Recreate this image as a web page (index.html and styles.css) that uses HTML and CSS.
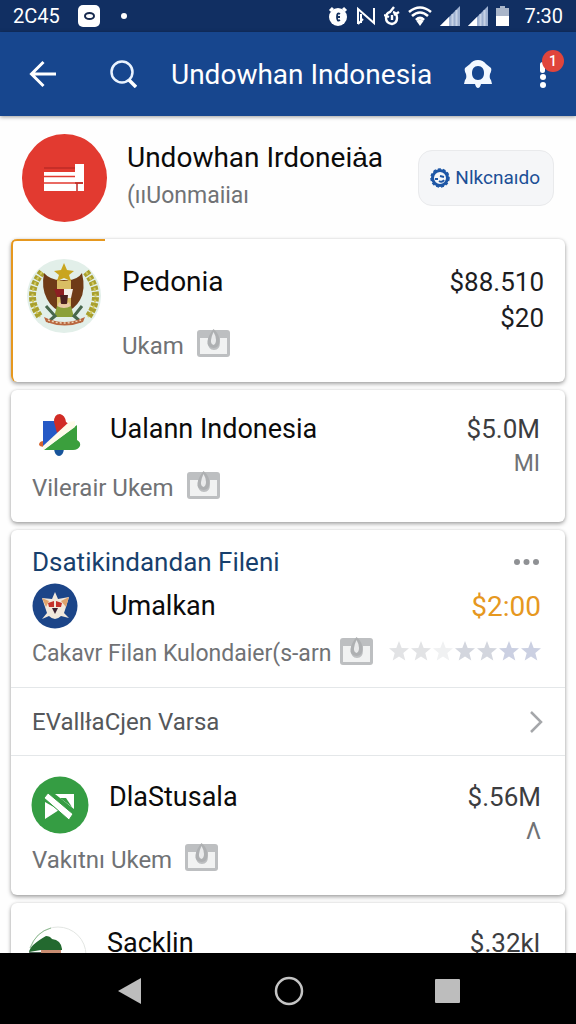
FILE: index.html
```html
<!DOCTYPE html>
<html lang="id">
<head>
  <meta charset="UTF-8" />
  <meta name="viewport" content="width=device-width, initial-scale=1.0"/>
  <title>Undowhan Indonesia</title>
  <link rel="stylesheet" href="styles.css">
</head>
<body>

  <!-- Shared icons -->
  <svg class="sprite" aria-hidden="true">
    <symbol id="card-icon" viewBox="0 0 33 28">
      <rect x="0" y="1" width="33" height="27" rx="3" fill="#bdbfc1"/>
      <path d="M3 9h8v4q0 8 6 8t6-8V9h7v16H3z" fill="#f1f2f2"/>
      <path d="M16.500 0q6 5 6 12t-6 7q-7-1-6-7t6-12z" fill="#aeb0b2"/>
      <path d="M16.500 3q2.500 4 2.500 8t-2.500 5q-3-1-2.500-5t2.500-8z" fill="#e9eaeb"/>
    </symbol>
    <symbol id="star" viewBox="0 0 20 20">
      <path d="M10 0l2.700 6.900 7.300.4-5.700 4.700 2 7.500L10 15.400 3.700 19.500l2-7.500L0 7.300l7.300-.4z" fill="currentColor"/>
    </symbol>
    <symbol id="signal" viewBox="0 0 20 20">
      <path d="M20 0v20H0z" fill="#9db0d0"/>
      <path d="M9 11v9H0z" fill="#fff"/>
      <path d="M12.500 8v12M16.500 4v16" stroke="#c6d2e6" stroke-width="2"/>
    </symbol>
  </svg>

  <div class="status-bar">
    <span class="status-time">2C45</span>
    <svg class="status-app" viewBox="0 0 22 22" width="22" height="22">
      <rect width="22" height="22" rx="5" fill="#fff"/>
      <ellipse cx="11.500" cy="11" rx="4.500" ry="3" fill="none" stroke="#16294d" stroke-width="2"/>
    </svg>
    <span class="status-dot"></span>
    <div class="status-icons">
      <svg viewBox="0 0 20 20" width="20" height="20">
        <circle cx="10" cy="11" r="9" fill="#fff"/>
        <path d="M2 5l3-3M18 5l-3-3" stroke="#fff" stroke-width="3"/>
        <path d="M12 8q-3-2-3 3t3 3M9 11h3" fill="none" stroke="#12305f" stroke-width="1.800"/>
      </svg>
      <svg viewBox="0 0 20 20" width="20" height="20">
        <path d="M2 18V3l16 14V2M5 17V8M2 18l5-5" fill="none" stroke="#fff" stroke-width="2"/>
      </svg>
      <svg viewBox="0 0 16 20" width="16" height="20">
        <path d="M10 1L6 6Q2 7 2 12t6 6q5-1 5-6t-4-6M0 9l5 2M15 6l-5 3" fill="none" stroke="#fff" stroke-width="2.400"/>
        <path d="M8 9v5" stroke="#fff" stroke-width="2.400"/>
      </svg>
      <svg viewBox="0 0 24 20" width="24" height="20">
        <path d="M1 6q11-9 22 0M4 10q8-7 16 0M8 14q4-4 8 0" fill="none" stroke="#fff" stroke-width="2.600"/>
        <path d="M8.500 15q3.500-3 7 0L12 20z" fill="#fff"/>
      </svg>
      <svg width="20" height="20"><use href="#signal"/></svg>
      <svg width="20" height="20"><use href="#signal"/></svg>
      <svg viewBox="0 0 13 20" width="13" height="20">
        <path d="M4 0h5v2h4v18H0V2h4z" fill="#a9b5c9"/>
        <path d="M0 10h13v10H0z" fill="#fff"/>
      </svg>
    </div>
    <span class="status-clock">7:30</span>
  </div>

  <header class="app-bar">
    <button class="icon-btn" aria-label="Back">
      <svg viewBox="0 0 28 28" width="28" height="28">
        <path d="M27 14H3M14.500 2L2.500 14l12 12" fill="none" stroke="#fff" stroke-width="3"/>
      </svg>
    </button>
    <button class="icon-btn search" aria-label="Search">
      <svg viewBox="0 0 28 28" width="28" height="28">
        <circle cx="13" cy="12" r="10.500" fill="none" stroke="#eaf3ff" stroke-width="2.500"/>
        <path d="M20 20l7 7" stroke="#fff" stroke-width="3.500"/>
      </svg>
    </button>
    <h1 class="app-title">Undowhan Indonesia</h1>
    <button class="icon-btn bell" aria-label="Notifications">
      <svg viewBox="0 0 28 28" width="28" height="28">
        <path fill-rule="evenodd" d="M14 0q5 0 8 4l5 4q1 2-1 6-1 4 1 6l1 4H17q-1 4-3 4t-3-4H0l1-4q2-2 1-6Q0 10 1 8l5-4q3-4 8-4zM14 6c-4 0-6 3-6 7s2 7 6 7 6-3 6-7-2-7-6-7z" fill="#f3f8ff"/>
      </svg>
    </button>
    <button class="icon-btn menu" aria-label="Menu, 1 alert">
      <svg viewBox="0 0 28 28" width="28" height="28">
        <rect x="11" y="2" width="5" height="11" rx="2.500" fill="#fff"/>
        <circle cx="14" cy="17" r="3" fill="#fff"/>
        <circle cx="14" cy="25" r="3" fill="#fff"/>
      </svg>
      <span class="badge">1</span>
    </button>
  </header>

  <main class="content">
    <section class="profile">
      <svg class="profile-logo" viewBox="0 0 86 88">
        <ellipse cx="42.500" cy="44" rx="42.500" ry="44" fill="#e23a30"/>
        <path d="M22 38h31v-8h9v27H22z" fill="#fff"/>
        <path d="M22 42.500h31M22 49h39" stroke="#e23a30" stroke-width="1.500"/>
        <path d="M22 34h31M53 49h8M55 49v8" stroke="#bd2b26" stroke-width="1.500"/>
      </svg>
      <div class="profile-text">
        <h2 class="name">Undowhan Irdoneiȧa</h2>
        <p class="sub">(ııUonmaiiaı</p>
      </div>
      <button class="follow-btn">
        <svg viewBox="0 0 20 20" width="20" height="20">
          <circle cx="10" cy="10" r="7.500" fill="none" stroke="#1d56a5" stroke-width="3"/>
          <circle cx="10" cy="10" r="9" fill="none" stroke="#1d56a5" stroke-width="1.500" stroke-dasharray="3 2"/>
          <path d="M5 11h3M10 8l4 1M9 13q3 2 5-1" fill="none" stroke="#1d56a5" stroke-width="2"/>
        </svg>
        Nlkcnaıdo
      </button>
    </section>

    <article class="card featured">
      <svg class="emblem" viewBox="0 0 74 74">
        <circle cx="37" cy="37" r="37" fill="#e2efe9"/>
        <path d="M15 13Q-3 36 13 58M59 13q18 23 2 45" fill="none" stroke="#a9a02e" stroke-width="7" stroke-dasharray="4 1.500"/>
        <path d="M15 13Q-3 36 13 58M59 13q18 23 2 45" fill="none" stroke="#d1c85e" stroke-width="2" stroke-dasharray="3 3"/>
        <path d="M17 14q7 8 20 7 13 1 18-7 4 17-2 27-5 9-16 13-12-4-17-14-6-11-3-26z" fill="#6f3b18"/>
        <path d="M30 20q7 4 14 0v28H30z" fill="#d9bd64"/>
        <path d="M27 30h10v8h-7z" fill="#8d1f22"/>
        <path d="M37 30h9l-2 9h-7z" fill="#f4efe8"/>
        <path d="M33 36h8l-1 9h-6z" fill="#4a2020"/>
        <path d="M32 43q5 5 10 0l2 6q-7 4-14 0z" fill="#e9c9a6"/>
        <path d="M30 47q7 4 14 0l3 11H27z" fill="#8ba039"/>
        <path d="M19 47l9 10-7 6M55 47l-8 10 7 6" fill="none" stroke="#48684c" stroke-width="3"/>
        <path d="M17 58q20 10 41 0l-2 5q-18 7-37 0z" fill="#b9673f"/>
        <path d="M21 61q16 6 33 0" fill="none" stroke="#ecd3b6" stroke-width="1.500" stroke-dasharray="2 2"/>
        <path d="M37 4l3 7 7 1-5 4 2 6-7-3-7 3 2-6-5-4 7-1z" fill="#c9a51f"/>
      </svg>
      <div class="card-main">
        <h3 class="name">Pedonia</h3>
        <p class="sub-row">Ukam <svg class="tag"><use href="#card-icon"/></svg></p>
      </div>
      <div class="amounts dark">
        <span>$88.510</span>
        <span>$20</span>
      </div>
    </article>

    <article class="card compact">
      <div class="card-main">
        <div class="head">
          <span class="logo-slot">
            <svg viewBox="0 0 42 42" width="42" height="42">
              <path d="M0 31q0-4 5-4l2 5q-5 2-7-1z" fill="#d5622d"/>
              <path d="M15 35h10q-1 7-5 7t-5-7z" fill="#17549a"/>
              <path d="M4 7h12l8 7-20 21z" fill="#2559c6"/>
              <path d="M15 8q0-8 6-8 5 1 6 8l3 2-12 9z" fill="#d12c25"/>
              <path d="M38 11v15q4 2 3 6-2 4-7 4H5z" fill="#3b9f3d"/>
              <path d="M4 36v-4L30 8l6-1v6z" fill="#fffbea"/>
            </svg>
          </span>
          <h3 class="name">Ualann Indonesia</h3>
        </div>
        <p class="sub-row">Vilerair Ukem <svg class="tag"><use href="#card-icon"/></svg></p>
      </div>
      <div class="amounts">
        <span>$5.0M</span>
        <small>MI</small>
      </div>
    </article>

    <article class="card group">
      <div class="group-head">
        <h3 class="group-title">Dsatikindandan Fileni</h3>
        <button class="more-btn" aria-label="More">
          <svg viewBox="0 0 26 6" width="26" height="6" fill="#8f9194">
            <circle cx="3" cy="3" r="3"/><circle cx="12.500" cy="3" r="3"/><circle cx="22" cy="3" r="3"/>
          </svg>
        </button>
      </div>
      <div class="rated">
        <div class="head">
          <span class="logo-slot">
            <svg viewBox="0 0 46 46" width="46" height="46">
              <circle cx="23" cy="23" r="22.500" fill="#1c4588"/>
              <path d="M10 15l10 1 3-7 3 7 11-2-3 10-2 6 5 5-8-2q-6 6-12 0l-7 3 5-6-2-6z" fill="#f1e8dc"/>
              <path d="M10 15l7 3-3 6zM37 14l-8 4 5 6z" fill="#dfa36d"/>
              <path d="M16 20l6-2v6h-5zM24 18l6 2-1 4h-5z" fill="#c3312b"/>
              <path d="M20 25h6l-3 6z" fill="#3b2030"/>
            </svg>
          </span>
          <h3 class="name">Umalkan</h3>
          <span class="price">$2:00</span>
        </div>
        <div class="sub-row">
          <span>Cakavr Filan Kulondaier(s-arn</span>
          <svg class="tag"><use href="#card-icon"/></svg>
          <span class="stars" role="img" aria-label="Rating">
            <svg class="faint"><use href="#star"/></svg>
            <svg class="faint"><use href="#star"/></svg>
            <svg class="fainter"><use href="#star"/></svg>
            <svg><use href="#star"/></svg>
            <svg><use href="#star"/></svg>
            <svg class="blue"><use href="#star"/></svg>
            <svg class="blue"><use href="#star"/></svg>
          </span>
        </div>
      </div>
      <a class="link-row" href="#">
        <span>EVallłaCjen Varsa</span>
        <svg viewBox="0 0 14 22" width="14" height="22">
          <path d="M2 1l10 10L2 21" fill="none" stroke="#a5a7aa" stroke-width="2.500"/>
        </svg>
      </a>
      <div class="group-item">
        <div class="card-main">
          <div class="head">
            <span class="logo-slot">
              <svg viewBox="0 0 58 58" width="58" height="58">
                <circle cx="29" cy="29" r="28.500" fill="#359d43"/>
                <path d="M14 26v17l14-9zM24 18h19v15z" fill="#fff"/>
                <path d="M29 22h6l6 9z" fill="#359d43"/>
                <path d="M13 22l4-5 25 21-4 6z" fill="#fff" stroke="#359d43" stroke-width="1"/>
              </svg>
            </span>
            <h3 class="name">DlaStusala</h3>
          </div>
          <p class="sub-row">Vakıtnı Ukem <svg class="tag"><use href="#card-icon"/></svg></p>
        </div>
        <div class="amounts">
          <span>$.56M</span>
          <small>Λ</small>
        </div>
      </div>
    </article>

    <article class="card last">
      <div class="head">
        <span class="logo-slot">
          <svg viewBox="0 0 58 58" width="58" height="58">
            <circle cx="29" cy="29" r="28" fill="#fff" stroke="#e3e6e3"/>
            <path d="M1 22Q7 6 22 2" fill="none" stroke="#8cba8f"/>
            <path d="M12 23h20v20H12z" fill="#c98d72"/>
            <path d="M0 26h12v12H4z" fill="#4d6357"/>
            <path d="M0 26q1-7 17-16 4 0 6 3 9 1 10 10v1H12z" fill="#23692f"/>
          </svg>
        </span>
        <h3 class="name">Sacklin</h3>
      </div>
      <div class="amounts">
        <span>$.32kl</span>
      </div>
    </article>
  </main>

  <nav class="nav-bar">
    <button class="nav-btn" aria-label="Back">
      <svg viewBox="0 0 28 28" width="28" height="28"><path d="M25 1v26L2 14z" fill="#bdbdbd"/></svg>
    </button>
    <button class="nav-btn" aria-label="Home">
      <svg viewBox="0 0 30 30" width="30" height="30"><circle cx="15" cy="15" r="13" fill="none" stroke="#c4c4c4" stroke-width="2.500"/></svg>
    </button>
    <button class="nav-btn" aria-label="Recent apps">
      <svg viewBox="0 0 26 26" width="26" height="26"><rect x="1" y="1" width="25" height="24" rx="1" fill="#bdbdbd"/></svg>
    </button>
  </nav>

</body>
</html>
```
FILE: styles.css
```css
:root {
  --blue: #17468e;
  --blue-dark: #112f62;
  --link: #1b4f96;
  --orange: #e6981f;
  --text: #0b0b0b;
  --text-mid: #3c3d3f;
  --text-light: #707275;
  --line: #e4e7e9;
}

* {
  box-sizing: border-box;
  margin: 0;
  padding: 0;
}

body {
  display: flex;
  flex-direction: column;
  height: 100vh;
  overflow: hidden;
  background: #fefefe;
  color: var(--text);
  font-family: Roboto, "Liberation Sans", sans-serif;
}

button {
  border: none;
  background: none;
  font-family: inherit;
  cursor: pointer;
}

svg {
  display: block;
  flex-shrink: 0;
}

.sprite {
  position: absolute;
  width: 0;
  height: 0;
}

/* Status bar */
.status-bar {
  display: flex;
  align-items: center;
  flex-shrink: 0;
  height: 32px;
  padding: 0 13px;
  background: var(--blue-dark);
  color: #fff;
  font-size: 20px;
}

.status-app {
  margin-left: 18px;
}

.status-dot {
  width: 6px;
  height: 6px;
  margin-left: 21px;
  border-radius: 50%;
  background: #fff;
}

.status-icons {
  display: flex;
  gap: 8px;
  margin-left: auto;
  margin-right: 15px;
}

/* App bar */
.app-bar {
  display: flex;
  align-items: center;
  flex-shrink: 0;
  height: 84px;
  padding: 0 19px 0 29px;
  background: var(--blue);
  color: #fff;
  box-shadow: 0 1px 4px rgba(0, 0, 0, 0.4);
  z-index: 1;
}

.icon-btn {
  position: relative;
}

.search {
  margin-left: 52px;
}

.app-title {
  flex: 1;
  margin-left: 34px;
  font-size: 28px;
  font-weight: 400;
  white-space: nowrap;
}

.menu {
  margin-left: 37px;
}

.badge {
  position: absolute;
  top: -10px;
  right: -7px;
  width: 22px;
  height: 22px;
  border-radius: 50%;
  background: #e0453c;
  color: #fff;
  font-size: 14px;
  font-weight: 500;
  line-height: 22px;
}

/* Profile */
.content {
  flex: 1;
  min-height: 0;
  overflow: hidden;
  padding: 0 11px;
}

.profile {
  display: flex;
  align-items: center;
  height: 123px;
  padding: 0 11px;
}

.profile-logo {
  width: 86px;
  height: 88px;
}

.profile-text {
  flex: 1;
  margin-left: 19px;
}

.name {
  font-size: 27px;
  font-weight: 400;
  line-height: 36px;
  white-space: nowrap;
}

.profile .name,
.featured .name {
  font-size: 28px;
}

.sub {
  color: var(--text-light);
  font-size: 23px;
  line-height: 40px;
}

.follow-btn {
  display: flex;
  align-items: center;
  gap: 5px;
  height: 56px;
  padding: 0 13px 0 11px;
  border: 1px solid #e9eaec;
  border-radius: 14px;
  background: #f5f6f8;
  color: var(--link);
  font-size: 19px;
}

/* Cards */
.card {
  position: relative;
  display: flex;
  margin-bottom: 8px;
  border-radius: 6px;
  background: #fff;
  box-shadow: 0 2px 4px rgba(0, 0, 0, 0.35), 0 0 3px rgba(0, 0, 0, 0.1);
}

.card-main {
  flex: 1;
}

.head {
  display: flex;
  align-items: center;
  flex: 1;
  height: 36px;
}

.logo-slot {
  display: flex;
  justify-content: center;
  flex-shrink: 0;
  width: 56px;
  margin-right: 21px;
}

.sub-row {
  display: flex;
  align-items: flex-start;
  color: var(--text-light);
  font-size: 24px;
  line-height: 34px;
  white-space: nowrap;
}

.tag {
  width: 33px;
  height: 28px;
  margin-left: 13px;
}

.amounts {
  display: flex;
  flex-direction: column;
  align-items: flex-end;
  color: var(--text-mid);
  font-size: 26px;
  line-height: 36px;
}

.amounts small {
  color: var(--text-light);
  font-size: 23px;
  line-height: 34px;
}

.amounts.dark {
  color: #1d1d1f;
}

.featured {
  padding: 25px 21px 19px 16px;
}

.featured::before,
.featured::after {
  content: "";
  position: absolute;
  top: 0;
  left: 0;
}

.featured::before {
  bottom: 0;
  width: 8px;
  border-left: 2px solid var(--orange);
  border-radius: 6px 0 0 6px;
}

.featured::after {
  width: 94px;
  height: 8px;
  border-top: 2px solid var(--orange);
  border-radius: 6px 0 0 0;
}

.emblem {
  width: 74px;
  height: 74px;
  margin: -5px 21px 0 0;
}

.featured .sub-row {
  margin-top: 29px;
}

.compact {
  padding: 21px 25px 17px 21px;
}

.compact .logo-slot {
  margin: 12px 22px 0 0;
}

.compact .sub-row {
  margin-top: 24px;
}

/* Grouped card */
.group {
  display: block;
}

.group-head {
  display: flex;
  align-items: center;
  justify-content: space-between;
  padding: 14px 25px 0 21px;
}

.group-title {
  color: #173f6d;
  font-size: 26px;
  font-weight: 400;
  line-height: 36px;
}

.rated {
  padding: 8px 24px 16px 21px;
}

.rated .logo-slot {
  justify-content: flex-start;
  margin-right: 22px;
}

.rated .sub-row {
  margin-top: 13px;
  font-size: 23px;
}

.rated .tag {
  margin-left: 9px;
}

.price {
  margin-left: auto;
  color: var(--orange);
  font-size: 28px;
}

.stars {
  display: flex;
  gap: 2px;
  margin: 4px 0 0 auto;
  color: #d3d6de;
}

.stars svg {
  width: 20px;
  height: 20px;
}

.stars .faint {
  color: #e2e3e5;
}

.stars .fainter {
  color: #f0f1f2;
}

.stars .blue {
  color: #cbd0e2;
}

.link-row {
  display: flex;
  align-items: center;
  justify-content: space-between;
  height: 69px;
  padding: 0 22px 0 21px;
  border-top: 1px solid var(--line);
  border-bottom: 1px solid var(--line);
  color: #55575a;
  font-size: 24px;
  text-decoration: none;
}

.group-item {
  display: flex;
  padding: 23px 24px 18px 21px;
}

.group-item .sub-row {
  margin-top: 28px;
}

.group-item .head .logo-slot {
  margin-top: 16px;
}

.last {
  height: 120px;
  padding: 22px 25px 0 19px;
}

.last .logo-slot {
  margin-top: 24px;
}

/* System navigation */
.nav-bar {
  display: flex;
  align-items: center;
  justify-content: center;
  gap: 130px;
  flex-shrink: 0;
  height: 71px;
  padding-top: 4px;
  background: #000;
  z-index: 1;
}
```
